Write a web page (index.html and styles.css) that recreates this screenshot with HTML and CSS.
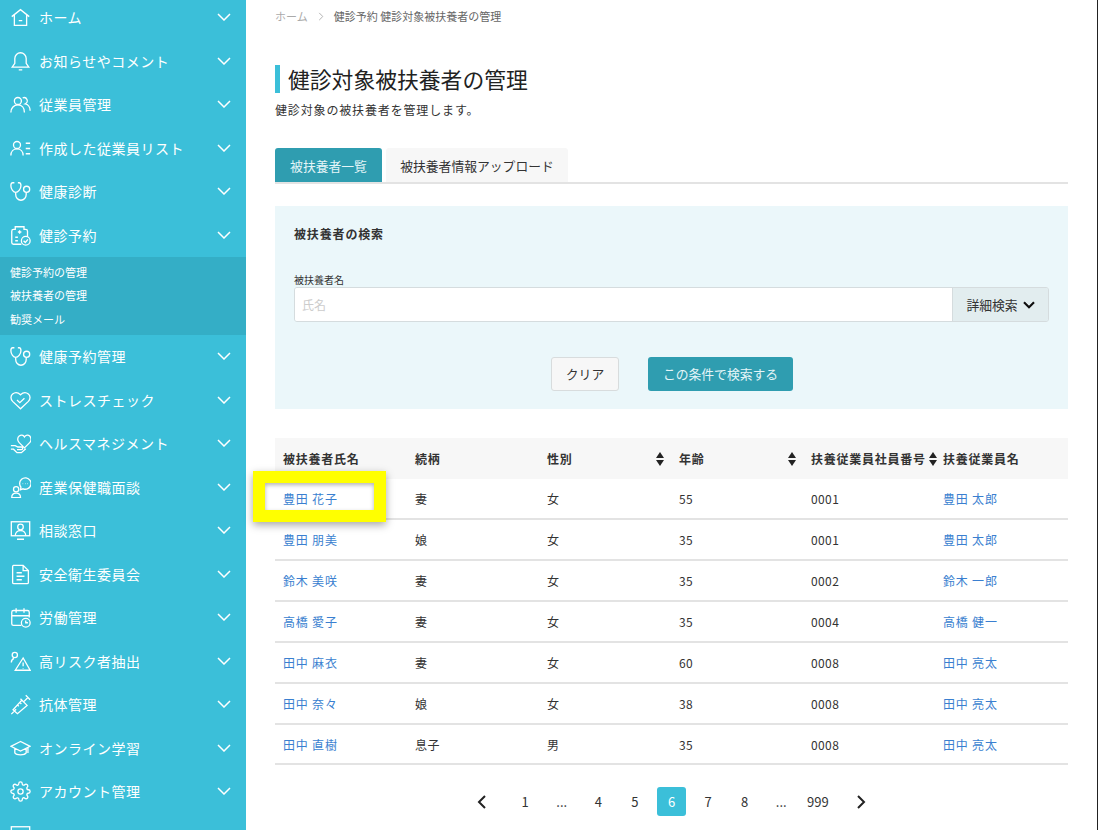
FILE: index.html
```html
<!DOCTYPE html>
<html lang="ja">
<head>
  <meta charset="UTF-8">
  <meta name="viewport" content="width=device-width, initial-scale=1.0">
  <title>健診対象被扶養者の管理</title>
  <link rel="stylesheet" href="styles.css">
</head>
<body>
  <div class="page">
    <!-- Sidebar -->
    <nav class="sidebar">
      <a class="nav-item"><svg class="nav-icon" viewBox="0 0 24 24"><path d="M2 11 12 3l10 8M5 9v12h14V9M10 15.5h4"/></svg><span>ホーム</span><svg class="chev" viewBox="0 0 14 8"><path d="M1 1l6 6 6-6"/></svg></a>
      <a class="nav-item"><svg class="nav-icon" viewBox="0 0 24 24"><path d="M12 2a6.5 6.5 0 0 1 6.5 6.5V14l3 4.5h-19l3-4.5V8.5A6.5 6.5 0 0 1 12 2zM10 21.5h4"/></svg><span>お知らせやコメント</span><svg class="chev" viewBox="0 0 14 8"><path d="M1 1l6 6 6-6"/></svg></a>
      <a class="nav-item"><svg class="nav-icon" viewBox="0 0 24 24"><circle cx="9" cy="8" r="4"/><path d="M1 21c0-5 3.5-8.5 8-8.5s7.5 3.5 7.5 8.5M14.5 4.5a3.7 3.7 0 1 1 3 6.8c3 .5 5.5 3.7 5.5 7.7"/></svg><span>従業員管理</span><svg class="chev" viewBox="0 0 14 8"><path d="M1 1l6 6 6-6"/></svg></a>
      <a class="nav-item"><svg class="nav-icon" viewBox="0 0 24 24"><circle cx="8" cy="8" r="4"/><path d="M1 20c0-4.5 3-7.5 7-7.5s7 3 7 7.5M18 6h5M18 12h5M18 18h5"/></svg><span>作成した従業員リスト</span><svg class="chev" viewBox="0 0 14 8"><path d="M1 1l6 6 6-6"/></svg></a>
      <a class="nav-item"><svg class="nav-icon" viewBox="0 0 24 24"><path d="M5 2H3C1.5 2 1 3 1 5.5c0 4 3 7.5 5.5 7.5s6-3.5 6-7.5c0-2.5-.5-3.5-2-3.5H9M6.5 13v2.5c0 3.5 2.5 6.5 6 6.5s6-3 6-6.5V13"/><circle cx="19" cy="9.500" r="3.500"/></svg><span>健康診断</span><svg class="chev" viewBox="0 0 14 8"><path d="M1 1l6 6 6-6"/></svg></a>
      <a class="nav-item"><svg class="nav-icon" viewBox="0 0 24 24"><path d="M13 22H4a2 2 0 0 1-2-2V7a2 2 0 0 1 2-2h2V2h10v3h2a2 2 0 0 1 2 2v6M11 6v4M9 8h4M6 14h3M6 18h3"/><circle cx="18" cy="18" r="5"/><path d="M15.5 18l2 2 3-3.5"/></svg><span>健診予約</span><svg class="chev" viewBox="0 0 14 8"><path d="M1 1l6 6 6-6"/></svg></a>
      <div class="sub-menu">
        <a>健診予約の管理</a>
        <a>被扶養者の管理</a>
        <a>勧奨メール</a>
      </div>
      <a class="nav-item"><svg class="nav-icon" viewBox="0 0 24 24"><path d="M5 2H3C1.5 2 1 3 1 5.5c0 4 3 7.5 5.5 7.5s6-3.5 6-7.5c0-2.5-.5-3.5-2-3.5H9M6.5 13v2.5c0 3.5 2.5 6.5 6 6.5s6-3 6-6.5V13"/><circle cx="19" cy="9.500" r="3.500"/></svg><span>健康予約管理</span><svg class="chev" viewBox="0 0 14 8"><path d="M1 1l6 6 6-6"/></svg></a>
      <a class="nav-item"><svg class="nav-icon" viewBox="0 0 24 24"><path d="M12 21.5 3 13C.5 10.5.5 6.5 3 4.5s6-2 9 1c3-3 6.5-3 9-1s2.5 6 0 8.5z"/><path d="M8 11.5l3.2 3 5.3-5"/></svg><span>ストレスチェック</span><svg class="chev" viewBox="0 0 14 8"><path d="M1 1l6 6 6-6"/></svg></a>
      <a class="nav-item"><svg class="nav-icon" viewBox="0 0 24 24"><path d="M16.5 17l-6-6C8 8.5 8.5 5 10.5 3.5S15 2 16.5 4.5C18 2 21 2 22.5 3.5S25 8.5 22.5 11zM1 14.5h5l3 1.5h4a1.5 1.5 0 0 1 0 3H8M1 18.5h3l4 4h5l5-4.5"/></svg><span>ヘルスマネジメント</span><svg class="chev" viewBox="0 0 14 8"><path d="M1 1l6 6 6-6"/></svg></a>
      <a class="nav-item"><svg class="nav-icon" viewBox="0 0 24 24"><circle cx="7" cy="14" r="3"/><path d="M2 23.5c0-3 2-5 5-5s5 2 5 5zM11 7.5a6.500 6.500 0 1 1 4 6L12 14.500l.5-3a6.500 6.500 0 0 1-1.500-4zM14.500 7.500h.5M17.500 7.500h.5M20 7.500h.5"/></svg><span>産業保健職面談</span><svg class="chev" viewBox="0 0 14 8"><path d="M1 1l6 6 6-6"/></svg></a>
      <a class="nav-item"><svg class="nav-icon" viewBox="0 0 24 24"><rect x="1.500" y="2" width="21" height="16"/><circle cx="12" cy="8" r="3.200"/><path d="M6 18c0-3.500 2.500-6 6-6s6 2.500 6 6M8 22h8"/></svg><span>相談窓口</span><svg class="chev" viewBox="0 0 14 8"><path d="M1 1l6 6 6-6"/></svg></a>
      <a class="nav-item"><svg class="nav-icon" viewBox="0 0 24 24"><path d="M4 1.500h11l6 6V21a1.500 1.500 0 0 1-1.500 1.500H4.500A1.500 1.500 0 0 1 3 21V3a1.500 1.500 0 0 1 1-1.500zM15 1.500v6h6M7.500 10h6M7.500 14h9M7.500 18h6"/></svg><span>安全衛生委員会</span><svg class="chev" viewBox="0 0 14 8"><path d="M1 1l6 6 6-6"/></svg></a>
      <a class="nav-item"><svg class="nav-icon" viewBox="0 0 24 24"><path d="M13 21H4a2 2 0 0 1-2-2V6a2 2 0 0 1 2-2h16a2 2 0 0 1 2 2v6M7 1.500v5M16 1.500v5M2 10h20"/><circle cx="18" cy="18" r="5"/><path d="M18 15.500V18h2.500"/></svg><span>労働管理</span><svg class="chev" viewBox="0 0 14 8"><path d="M1 1l6 6 6-6"/></svg></a>
      <a class="nav-item"><svg class="nav-icon" viewBox="0 0 24 24"><circle cx="5.500" cy="4.500" r="3"/><path d="M1.500 13c0-2 1-3.500 3-4.500M15 8 6 22h17zM15 13v4.500M15 19.500v.5"/></svg><span>高リスク者抽出</span><svg class="chev" viewBox="0 0 14 8"><path d="M1 1l6 6 6-6"/></svg></a>
      <a class="nav-item"><svg class="nav-icon" viewBox="0 0 24 24"><path d="M1.500 23 7 17.500M5 19.500 3.500 18l10-11 6 6-11 9.500zM8 12l2 2M11 9.500l2 2M12 5.500l7.500 7.500M15.500 9l5-5M18 1.500l5 5"/></svg><span>抗体管理</span><svg class="chev" viewBox="0 0 14 8"><path d="M1 1l6 6 6-6"/></svg></a>
      <a class="nav-item"><svg class="nav-icon" viewBox="0 0 24 24"><path d="M12 4 1 9.500 12 15l11-5.500zM5.500 12v5c2 3 11 3 13 0v-5M20.500 11v6"/></svg><span>オンライン学習</span><svg class="chev" viewBox="0 0 14 8"><path d="M1 1l6 6 6-6"/></svg></a>
      <a class="nav-item"><svg class="nav-icon" viewBox="0 0 24 24"><circle cx="12" cy="12" r="3"/><path d="M19.4 15a1.65 1.65 0 0 0 .33 1.82l.06.06a2 2 0 0 1 0 2.83 2 2 0 0 1-2.83 0l-.06-.06a1.65 1.65 0 0 0-1.82-.33 1.65 1.65 0 0 0-1 1.51V21a2 2 0 0 1-2 2 2 2 0 0 1-2-2v-.09A1.65 1.65 0 0 0 9 19.4a1.65 1.65 0 0 0-1.82.33l-.06.06a2 2 0 0 1-2.83 0 2 2 0 0 1 0-2.83l.06-.06a1.65 1.65 0 0 0 .33-1.82 1.65 1.65 0 0 0-1.51-1H3a2 2 0 0 1-2-2 2 2 0 0 1 2-2h.09A1.65 1.65 0 0 0 4.6 9a1.65 1.65 0 0 0-.33-1.82l-.06-.06a2 2 0 0 1 0-2.83 2 2 0 0 1 2.83 0l.06.06a1.65 1.65 0 0 0 1.82.33H9a1.65 1.65 0 0 0 1-1.51V3a2 2 0 0 1 2-2 2 2 0 0 1 2 2v.09a1.65 1.65 0 0 0 1 1.51 1.65 1.65 0 0 0 1.82-.33l.06-.06a2 2 0 0 1 2.83 0 2 2 0 0 1 0 2.83l-.06.06a1.65 1.65 0 0 0-.33 1.82V9a1.65 1.65 0 0 0 1.51 1H21a2 2 0 0 1 2 2 2 2 0 0 1-2 2h-.09a1.65 1.65 0 0 0-1.51 1z"/></svg><span>アカウント管理</span><svg class="chev" viewBox="0 0 14 8"><path d="M1 1l6 6 6-6"/></svg></a>
      <a class="nav-item"><svg class="nav-icon" viewBox="0 0 24 24"><rect x="1.500" y="2" width="21" height="18"/></svg></a>
    </nav>

    <!-- Main content -->
    <main class="content">
      <div class="breadcrumb">
        <span class="crumb-home">ホーム</span>
        <svg class="crumb-sep" viewBox="0 0 6 10"><path d="M1 1l4 4-4 4"/></svg>
        <span>健診予約 健診対象被扶養者の管理</span>
      </div>

      <h1 class="page-title">健診対象被扶養者の管理</h1>
      <p class="page-desc">健診対象の被扶養者を管理します。</p>

      <div class="tabs">
        <a class="tab tab-active">被扶養者一覧</a>
        <a class="tab">被扶養者情報アップロード</a>
      </div>

      <section class="search-panel">
        <h2 class="search-title">被扶養者の検索</h2>
        <label class="search-label">被扶養者名</label>
        <div class="search-row">
          <input class="search-input" type="text" placeholder="氏名">
          <button class="detail-btn">詳細検索<svg viewBox="0 0 12 8"><path d="M1 1.200l5 5 5-5"/></svg></button>
        </div>
        <div class="search-actions">
          <button class="btn btn-clear">クリア</button>
          <button class="btn btn-search">この条件で検索する</button>
        </div>
      </section>

      <table class="result-table">
        <thead>
          <tr>
            <th>被扶養者氏名</th>
            <th>続柄</th>
            <th class="sortable">性別</th>
            <th class="sortable">年齢</th>
            <th class="sortable">扶養従業員社員番号</th>
            <th>扶養従業員名</th>
          </tr>
        </thead>
        <tbody>
          <tr><td class="first-cell"><a>豊田 花子</a><div class="highlight"></div></td><td>妻</td><td>女</td><td>55</td><td>0001</td><td><a>豊田 太郎</a></td></tr>
          <tr><td><a>豊田 朋美</a></td><td>娘</td><td>女</td><td>35</td><td>0001</td><td><a>豊田 太郎</a></td></tr>
          <tr><td><a>鈴木 美咲</a></td><td>妻</td><td>女</td><td>35</td><td>0002</td><td><a>鈴木 一郎</a></td></tr>
          <tr><td><a>高橋 愛子</a></td><td>妻</td><td>女</td><td>35</td><td>0004</td><td><a>高橋 健一</a></td></tr>
          <tr><td><a>田中 麻衣</a></td><td>妻</td><td>女</td><td>60</td><td>0008</td><td><a>田中 亮太</a></td></tr>
          <tr><td><a>田中 奈々</a></td><td>娘</td><td>女</td><td>38</td><td>0008</td><td><a>田中 亮太</a></td></tr>
          <tr><td><a>田中 直樹</a></td><td>息子</td><td>男</td><td>35</td><td>0008</td><td><a>田中 亮太</a></td></tr>
        </tbody>
      </table>

      <div class="pagination">
        <a class="page-arrow"><svg viewBox="0 0 10 16"><path d="M8 2 2 8l6 6"/></svg></a>
        <a>1</a><a>...</a><a>4</a><a>5</a><a class="current">6</a><a>7</a><a>8</a><a>...</a><a>999</a>
        <a class="page-arrow"><svg viewBox="0 0 10 16"><path d="M2 2l6 6-6 6"/></svg></a>
      </div>
    </main>
  </div>
</body>
</html>
```

FILE: styles.css
```css
/* Global */
* {
  box-sizing: border-box;
}

html, body {
  height: 100%;
  margin: 0;
  overflow: hidden;
}

body {
  font-family: "Noto Sans CJK JP", "Noto Sans", sans-serif;
  background-color: #fff;
  color: #333;
}

.page {
  display: flex;
  height: 830px;
  overflow: hidden;
}

/* Sidebar */
.sidebar {
  flex: 0 0 246px;
  height: 830px;
  overflow: hidden;
  background-color: #3bbfd9;
  color: #fff;
}

.nav-item {
  display: flex;
  align-items: center;
  height: 43.5px;
  padding: 0 15px 0 10px;
  font-size: 14px;
  letter-spacing: 0.5px;
}

.nav-item:first-child {
  margin-top: -4px;
}

.nav-item span {
  flex: 1;
  margin-left: 8px;
  margin-top: -1px;
}

.nav-icon {
  flex: none;
  width: 21px;
  height: 21px;
  fill: none;
  stroke: #fff;
  stroke-width: 1.5;
}

.chev {
  flex: none;
  width: 14px;
  height: 8px;
  margin-left: auto;
  margin-top: -1px;
  fill: none;
  stroke: #fff;
  stroke-width: 1.5;
}

.sub-menu {
  display: flex;
  flex-direction: column;
  justify-content: center;
  height: 78px;
  padding-left: 10px;
  background-color: #34aec6;
  font-size: 11px;
}

.sub-menu a {
  height: 23.6px;
  line-height: 23.6px;
}

/* Main */
.content {
  flex: 0 0 852px;
  padding: 0 29px 0 29px;
  border-right: 1px solid #222;
}

.breadcrumb {
  display: flex;
  align-items: center;
  height: 16px;
  margin-top: 8px;
  font-size: 11px;
  color: #666;
}

.crumb-home {
  color: #aaa;
}

.crumb-sep {
  width: 6px;
  height: 9px;
  margin: 0 10px 0 10px;
  fill: none;
  stroke: #aaa;
  stroke-width: 1;
}

.page-title {
  height: 28px;
  margin: 41px 0 0;
  padding-left: 8px;
  border-left: 5px solid #3bbfd9;
  font-size: 21.8px;
  font-weight: 400;
  line-height: 28px;
  color: #222;
}

.page-desc {
  margin: 8px 0 0;
  font-size: 12px;
  line-height: 18px;
  letter-spacing: 0.85px;
}

/* Tabs */
.tabs {
  display: flex;
  gap: 4px;
  height: 36px;
  margin-top: 29px;
  border-bottom: 2px solid #e3e3e3;
}

.tab {
  display: flex;
  align-items: center;
  justify-content: center;
  width: 182px;
  border-radius: 3px 3px 0 0;
  background-color: #f7f7f7;
  font-size: 12.8px;
}

.tab-active {
  width: 107px;
  background-color: #2f9db0;
  color: #e4f5f8;
}

/* Search */
.search-panel {
  height: 203px;
  margin-top: 22px;
  padding: 19px 19px 0;
  background-color: #ebf7fa;
}

.search-title {
  margin: 0;
  font-size: 12px;
  font-weight: 700;
  line-height: 18px;
  letter-spacing: 0.85px;
}

.search-label {
  display: block;
  margin-top: 30px;
  font-size: 10px;
  line-height: 14px;
}

.search-row {
  display: flex;
  height: 35px;
  border: 1px solid #d5dcde;
  border-radius: 3px;
  overflow: hidden;
}

.search-input {
  flex: 1;
  min-width: 0;
  padding: 0 7px;
  border: 0;
  outline: 0;
  font-family: inherit;
  font-size: 12px;
}

.search-input::placeholder {
  color: #ccc;
}

.detail-btn {
  display: flex;
  align-items: center;
  justify-content: center;
  gap: 5px;
  width: 96px;
  padding: 0;
  border: 0;
  border-left: 1px solid #d5dcde;
  background-color: #e2edef;
  font-family: inherit;
  font-size: 12.8px;
  color: #333;
}

.detail-btn svg {
  width: 12px;
  height: 8px;
  fill: none;
  stroke: #111;
  stroke-width: 2.2;
}

.search-actions {
  display: flex;
  justify-content: center;
  gap: 29px;
  margin-top: 35px;
  padding-left: 1px;
}

.btn {
  height: 34px;
  padding: 0 0 2px;
  border-radius: 3px;
  font-family: inherit;
  font-size: 12.8px;
}

.btn-clear {
  width: 68px;
  border: 1px solid #d8dcdd;
  background-color: #f7f7f7;
  color: #333;
}

.btn-search {
  width: 145px;
  border: 0;
  background-color: #2f9db0;
  color: #e4f5f8;
}

/* Table */
.result-table {
  width: 793px;
  margin-top: 29px;
  border-collapse: collapse;
  table-layout: fixed;
  font-size: 12px;
}

.result-table th {
  position: relative;
  width: 132px;
  height: 41px;
  padding: 0 0 0 8px;
  background-color: #f7f7f7;
  text-align: left;
  font-weight: 700;
  letter-spacing: 0.75px;
  white-space: nowrap;
}

.result-table th:last-child {
  width: 133px;
}

/* sort arrows */
.sortable::before,
.sortable::after {
  content: "";
  position: absolute;
  right: 7px;
  border-left: 4px solid transparent;
  border-right: 4px solid transparent;
}

.sortable::before {
  top: 14px;
  border-bottom: 6px solid #222;
}

.sortable::after {
  top: 22px;
  border-top: 6px solid #222;
}

.result-table th:nth-child(5)::before,
.result-table th:nth-child(5)::after {
  right: -2px;
  z-index: 1;
}

.result-table td {
  height: 41px;
  padding: 0 0 0 8px;
  border-bottom: 2px solid #e3e3e3;
  letter-spacing: 0.4px;
}

.result-table tr:first-child td,
.result-table tr:last-child td {
  height: 40px;
}

.result-table td a {
  color: #3a7fd0;
  letter-spacing: 0.8px;
}

.first-cell {
  position: relative;
}

/* yellow annotation drawn over the first row */
.highlight {
  position: absolute;
  left: -22px;
  top: -8px;
  width: 133px;
  height: 51px;
  border: 12px solid #ffff00;
  box-shadow: 0 3px 8px rgba(0, 0, 0, 0.35), inset 0 2px 4px rgba(0, 0, 0, 0.3);
}

/* Pagination */
.pagination {
  display: flex;
  justify-content: center;
  align-items: center;
  margin-top: 22px;
  font-size: 13px;
}

.pagination a {
  display: flex;
  align-items: center;
  justify-content: center;
  width: 29px;
  height: 29px;
  margin: 0 3.8px;
  border-radius: 3px;
}

.pagination .current {
  background-color: #3bbfd9;
  color: #fff;
}

.pagination .page-arrow {
  margin: 0 10px;
}

.page-arrow svg {
  width: 10px;
  height: 16px;
  fill: none;
  stroke: #222;
  stroke-width: 2;
}
```
